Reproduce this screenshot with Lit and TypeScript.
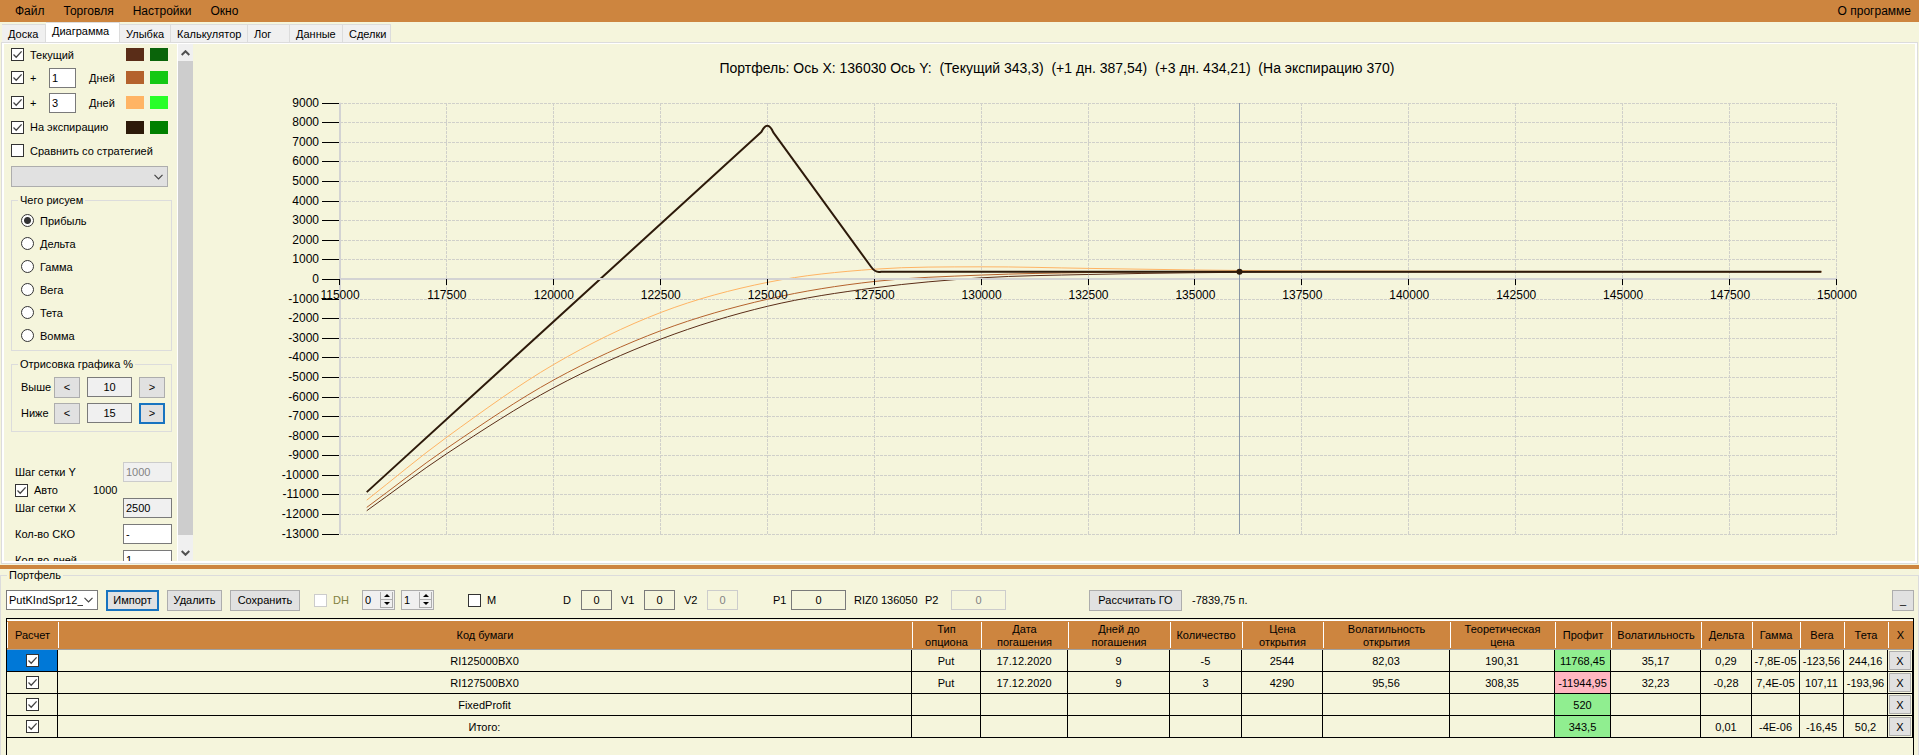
import { LitElement, html, svg, css } from "lit";
import { customElement } from "lit/decorators.js";
import { classMap } from "lit/directives/class-map.js";

const base = css`
  * {
    box-sizing: border-box;
  }
  button,
  input,
  select {
    font: inherit;
    color: inherit;
    margin: 0;
    border-radius: 0;
  }
  button {
    padding: 0;
    height: 21px;
    background: #e1e1e1;
    border: 1px solid #adadad;
  }
  button.focus {
    border: 2px solid #1874c0;
  }
  input[type="text"] {
    height: 20px;
    padding: 0 2px;
    background: #fff;
    border: 1px solid #7a7a7a;
  }
  input[type="checkbox"],
  input[type="radio"] {
    appearance: none;
    flex: none;
    width: 13px;
    height: 13px;
    background: #fff center / 11px 11px no-repeat;
    border: 1px solid #333;
  }
  input[type="checkbox"]:checked {
    background-image: url("data:image/svg+xml,%3Csvg xmlns='http://www.w3.org/2000/svg' viewBox='0 0 11 11'%3E%3Cpath d='M1.5 5.5 4.2 8.2 9.6 2.4' fill='none' stroke='%23444' stroke-width='1.3'/%3E%3C/svg%3E");
  }
  input[type="checkbox"]:disabled {
    border-color: #ccc;
  }
  input[type="radio"] {
    border-radius: 50%;
  }
  input[type="radio"]:checked {
    background-image: radial-gradient(circle, #333 3px, transparent 4px);
  }
  select {
    appearance: none;
    padding: 0 14px 0 2px;
    border: 1px solid #7a7a7a;
    background: #fff right 4px center / 9px 6px no-repeat
      url("data:image/svg+xml,%3Csvg xmlns='http://www.w3.org/2000/svg' viewBox='0 0 9 6'%3E%3Cpath d='M.5 .8 4.5 4.8 8.5 .8' fill='none' stroke='%23444' stroke-width='1.2'/%3E%3C/svg%3E");
  }
  label {
    white-space: nowrap;
  }
`;

const LEFT = 145;
const RIGHT = 1642;
const TOP = 58;
const BOTTOM = 489;
const px = (price: number) => LEFT + ((price - 115000) / 35000) * (RIGHT - LEFT);
const py = (value: number) => TOP + ((9000 - value) / 22000) * (BOTTOM - TOP);

const PRICES = [115625, 117500, 120000, 122500, 125000, 127500, 130000, 132500, 135000, 137500, 149633];
const CURVES = [
  { color: "#5a2d18", values: [-11830, -8910, -5550, -3070, -1390, -450, 60, 230, 320, 355, 370] },
  { color: "#b4622d", values: [-11660, -8640, -5150, -2640, -1030, -125, 200, 330, 375, 385, 370] },
  { color: "#ffb464", values: [-11290, -8070, -4360, -1710, -170, 500, 620, 540, 460, 410, 370] },
];

function smooth(values: number[]): string {
  const pts = values.map((v, i) => [px(PRICES[i]), py(v)]);
  const slope = pts.map((_, i) => {
    const a = pts[Math.max(0, i - 1)];
    const b = pts[Math.min(pts.length - 1, i + 1)];
    return (b[1] - a[1]) / (b[0] - a[0]);
  });
  let d = `M${pts[0][0]} ${pts[0][1]}`;
  for (let i = 1; i < pts.length; i++) {
    const [x0, y0] = pts[i - 1];
    const [x1, y1] = pts[i];
    const h = (x1 - x0) / 3;
    d += `C${x0 + h} ${y0 + h * slope[i - 1]} ${x1 - h} ${y1 - h * slope[i]} ${x1} ${y1}`;
  }
  return d;
}

@customElement("profit-chart")
class ProfitChart extends LitElement {
  static styles = css`
    :host {
      display: block;
      min-width: 0;
    }
    svg {
      display: block;
      width: 100%;
      height: 100%;
      font: 12px "Liberation Sans", Arial, sans-serif;
    }
    .title {
      font-size: 14px;
      white-space: pre;
      text-anchor: middle;
    }
    .grid {
      stroke: #d0d0ca;
      stroke-dasharray: 3 1;
      shape-rendering: crispEdges;
    }
    .axis {
      stroke: #d3d3d3;
      stroke-width: 2;
    }
    .tick {
      stroke: #000;
      shape-rendering: crispEdges;
    }
    .cursor {
      stroke: #8c9aaa;
      shape-rendering: crispEdges;
    }
    .ylabel {
      text-anchor: end;
    }
    .xlabel {
      text-anchor: middle;
    }
    .curve {
      fill: none;
    }
    .expiry {
      fill: none;
      stroke: #2d1a0a;
      stroke-width: 2;
      stroke-linejoin: round;
    }
  `;

  render() {
    const xs = Array.from({ length: 15 }, (_, i) => 115000 + i * 2500);
    const ys = Array.from({ length: 23 }, (_, i) => 9000 - i * 1000);
    const zero = py(0);
    const flat = py(370);
    return html`<svg viewBox="0 0 1720 516" role="img" aria-label="Портфель">
      <text class="title" x="862" y="28">Портфель: Ось X: 136030 Ось Y:  (Текущий 343,3)  (+1 дн. 387,54)  (+3 дн. 434,21)  (На экспирацию 370)</text>
      ${ys.map((v) => svg`<line class="grid" x1=${LEFT} x2=${RIGHT} y1=${py(v) + 0.5} y2=${py(v) + 0.5}></line>`)}
      ${xs.map((p) => svg`<line class="grid" x1=${px(p) - 0.5} x2=${px(p) - 0.5} y1=${TOP} y2=${BOTTOM}></line>`)}
      ${CURVES.map((c) => svg`<path class="curve" stroke=${c.color} d=${smooth(c.values)}></path>`)}
      <path
        class="expiry"
        d="M${px(115625)} ${py(-10880)}L${px(124850)} ${py(7500)}Q${px(125000)} ${py(8150)} ${px(125130)} ${py(7480)}L${px(127420)} ${py(610)}Q${px(127520)} ${py(300)} ${px(127650)} ${flat}H${px(149633)}"
      ></path>
      <line class="axis" x1=${LEFT} x2=${LEFT} y1=${TOP} y2=${BOTTOM}></line>
      <line class="axis" x1=${LEFT} x2=${RIGHT} y1=${zero} y2=${zero}></line>
      ${ys.map(
        (v) => svg`<line class="tick" x1="127" x2="144" y1=${py(v) + 0.5} y2=${py(v) + 0.5}></line>
          <text class="ylabel" x="124" y=${py(v) + 4}>${v}</text>`
      )}
      ${xs.map(
        (p) => svg`<line class="tick" x1=${px(p) - 0.5} x2=${px(p) - 0.5} y1=${zero} y2=${zero + 6}></line>
          <text class="xlabel" x=${px(p)} y=${zero + 20}>${p}</text>`
      )}
      <line class="cursor" x1=${px(136030)} x2=${px(136030)} y1=${TOP} y2=${BOTTOM}></line>
      <circle cx=${px(136030)} cy=${flat} r="3" fill="#2d1a0a"></circle>
    </svg>`;
  }
}

@customElement("side-panel")
class SidePanel extends LitElement {
  static styles = [
    base,
    css`
      :host {
        display: grid;
        grid-template-columns: 173px 15px;
        gap: 1px;
        background: #fff;
        margin-right: 2px;
        overflow: hidden;
        min-height: 0;
      }
      .body {
        background: #f5f5dc;
        padding: 0 5px 0 7px;
        overflow: hidden;
        min-height: 0;
      }
      .row {
        display: grid;
        grid-template-columns: 13px 13px 27px 1fr 18px 18px;
        column-gap: 6px;
        align-items: center;
        height: 24px;
        padding-right: 4px;
      }
      .row.top {
        height: 21px;
      }
      .row.tall {
        height: 25px;
      }
      .wide {
        grid-column: 2 / 5;
      }
      .days {
        width: 27px;
      }
      .unit {
        padding-left: 7px;
      }
      .swatch {
        height: 13px;
      }
      .check {
        display: flex;
        align-items: center;
        gap: 6px;
        height: 23px;
      }
      .compare {
        display: block;
        width: 157px;
        height: 21px;
        margin-top: 4px;
        background-color: #e1e1e1;
        border-color: #adadad;
      }
      fieldset {
        margin: 7px 0;
        padding: 2px 6px 3px 9px;
        border: 1px solid #dcdcdc;
      }
      legend {
        margin-left: -3px;
        padding: 0 2px;
        height: 13px;
        line-height: 13px;
      }
      .radios label {
        display: flex;
        align-items: center;
        gap: 6px;
        height: 23px;
      }
      .range {
        display: grid;
        grid-template-columns: 26px 26px 45px 26px;
        column-gap: 7px;
        align-items: center;
        height: 26px;
      }
      .range input {
        width: 45px;
        text-align: center;
        background: #f0f0f0;
      }
      .draw {
        padding-top: 3px;
        padding-bottom: 5px;
        margin-bottom: 0;
      }
      .range span {
        white-space: nowrap;
      }
      .steps {
        padding: 27px 0 0 4px;
      }
      .step {
        display: grid;
        grid-template-columns: 1fr 49px;
        align-items: center;
        height: 26px;
      }
      .step input {
        width: 49px;
      }
      .step .off {
        color: #838383;
        background: #f0f0f0;
        border-color: #ccc;
      }
      .step .grey {
        background: #f0f0f0;
      }
      .auto {
        display: flex;
        align-items: center;
        gap: 6px;
        height: 10px;
      }
      .auto output {
        margin-left: 29px;
      }
      .scroll {
        display: grid;
        grid-template-rows: 17px 1fr 17px;
        background: #f0f0f0;
        min-height: 0;
      }
      .scroll button {
        border: 0;
        height: auto;
        background: #f0f0f0;
        display: grid;
        place-items: center;
      }
      .thumb {
        margin-bottom: 9px;
        background: #cdcdcd;
      }
      .chev {
        width: 9px;
        height: 6px;
        fill: none;
        stroke: #505050;
        stroke-width: 2;
      }
    `,
  ];

  private days(id: string, value: string, a: string, b: string) {
    return html`<div class="row tall">
      <input type="checkbox" id=${id} checked />
      <label for=${id}>+</label>
      <input class="days" type="text" .value=${value} aria-label="Дней" />
      <span class="unit">Дней</span>
      ${this.swatch(a)}${this.swatch(b)}
    </div>`;
  }

  private swatch(color: string) {
    return html`<span class="swatch" style="background:${color}"></span>`;
  }

  private range(name: string, value: string, focus: boolean) {
    return html`<div class="range">
      <span>${name}</span>
      <button type="button">&lt;</button>
      <input type="text" .value=${value} aria-label=${name} />
      <button type="button" class=${classMap({ focus })}>&gt;</button>
    </div>`;
  }

  render() {
    const modes = ["Прибыль", "Дельта", "Гамма", "Вега", "Тета", "Вомма"];
    return html`
      <div class="body">
        <div class="row top">
          <input type="checkbox" id="now" checked /><label class="wide" for="now">Текущий</label>
          ${this.swatch("#5a2d18")}${this.swatch("#0a640a")}
        </div>
        ${this.days("plus1", "1", "#b4622d", "#14c814")}
        ${this.days("plus3", "3", "#ffb464", "#28ff28")}
        <div class="row">
          <input type="checkbox" id="exp" checked /><label class="wide" for="exp">На экспирацию</label>
          ${this.swatch("#2d1a0a")}${this.swatch("#008000")}
        </div>
        <label class="check"><input type="checkbox" />Сравнить со стратегией</label>
        <select class="compare" aria-label="Стратегия"></select>
        <fieldset class="radios">
          <legend>Чего рисуем</legend>
          ${modes.map(
            (m, i) => html`<label><input type="radio" name="mode" ?checked=${i === 0} />${m}</label>`
          )}
        </fieldset>
        <fieldset class="draw">
          <legend>Отрисовка графика %</legend>
          ${this.range("Выше", "10", false)} ${this.range("Ниже", "15", true)}
        </fieldset>
        <div class="steps">
          <div class="step">
            <label for="sy">Шаг сетки Y</label><input class="off" id="sy" type="text" value="1000" disabled />
          </div>
          <div class="auto">
            <input type="checkbox" id="auto" checked /><label for="auto">Авто</label><output>1000</output>
          </div>
          <div class="step">
            <label for="sx">Шаг сетки X</label><input class="grey" id="sx" type="text" value="2500" />
          </div>
          <div class="step"><label for="sko">Кол-во СКО</label><input id="sko" type="text" value="-" /></div>
          <div class="step"><label for="dn">Кол-во дней</label><input id="dn" type="text" value="1" /></div>
        </div>
      </div>
      <div class="scroll">
        <button type="button" aria-label="Вверх">
          <svg class="chev" viewBox="0 0 9 6"><path d="M.7 5 4.5 1.2 8.3 5"></path></svg>
        </button>
        <div class="thumb"></div>
        <button type="button" aria-label="Вниз">
          <svg class="chev" viewBox="0 0 9 6"><path d="M.7 1 4.5 4.8 8.3 1"></path></svg>
        </button>
      </div>
    `;
  }
}

const COLUMNS: [string, number][] = [
  ["Расчет", 51],
  ["Код бумаги", 0],
  ["Тип опциона", 69],
  ["Дата погашения", 87],
  ["Дней до погашения", 102],
  ["Количество", 72],
  ["Цена открытия", 81],
  ["Волатильность открытия", 127],
  ["Теоретическая цена", 105],
  ["Профит", 56],
  ["Волатильность", 90],
  ["Дельта", 51],
  ["Гамма", 48],
  ["Вега", 44],
  ["Тета", 44],
  ["X", 25],
];
const ROWS = [
  ["RI125000BX0", "Put", "17.12.2020", "9", "-5", "2544", "82,03", "190,31", "11768,45", "35,17", "0,29", "-7,8E-05", "-123,56", "244,16"],
  ["RI127500BX0", "Put", "17.12.2020", "9", "3", "4290", "95,56", "308,35", "-11944,95", "32,23", "-0,28", "7,4E-05", "107,11", "-193,96"],
  ["FixedProfit", "", "", "", "", "", "", "", "520", "", "", "", "", ""],
  ["Итого:", "", "", "", "", "", "", "", "343,5", "", "0,01", "-4E-06", "-16,45", "50,2"],
];
const PROFIT = 8;

@customElement("portfolio-panel")
class PortfolioPanel extends LitElement {
  static styles = [
    base,
    css`
      :host {
        display: flex;
        min-height: 0;
        overflow: hidden;
      }
      .box {
        flex: 1;
        min-width: 0;
        margin: 0;
        padding: 0 4px 0 5px;
        border: 1px solid #dcdcdc;
        border-bottom: 0;
        display: flex;
        flex-direction: column;
      }
      legend {
        margin-left: 1px;
        padding: 0 2px;
        line-height: 13px;
      }
      .bar {
        display: flex;
        align-items: center;
        height: 24px;
        margin: 6px 0;
      }
      .group {
        display: flex;
        align-items: center;
        gap: 8px;
      }
      .file {
        width: 92px;
        height: 20px;
      }
      .w53 {
        width: 53px;
      }
      .w55 {
        width: 55px;
      }
      .w70 {
        width: 70px;
      }
      .w93 {
        width: 93px;
      }
      .hedge {
        margin-left: 14px;
        width: 48px;
        gap: 6px;
        color: #80803c;
      }
      .spins {
        gap: 6px;
      }
      .mode {
        margin-left: 34px;
        width: 95px;
        gap: 6px;
      }
      .fields {
        gap: 9px;
      }
      .prices {
        margin-left: 35px;
      }
      .field {
        display: flex;
        align-items: center;
      }
      .field input {
        width: 31px;
        text-align: center;
        background: transparent;
      }
      .field input:disabled {
        color: #838383;
        border-color: #ccc;
      }
      .field.long input {
        width: 55px;
      }
      .l18 {
        width: 18px;
      }
      .l23 {
        width: 23px;
      }
      .l26 {
        width: 26px;
      }
      .code {
        width: 63px;
        white-space: nowrap;
      }
      .calc {
        margin-left: 83px;
        gap: 10px;
      }
      .min {
        margin-left: auto;
        width: 22px;
      }
      .spin {
        display: grid;
        grid-template-columns: 1fr 13px;
        width: 33px;
        height: 20px;
        padding: 1px;
        border: 1px solid #adadad;
        background: #f0f0f0;
      }
      .spin input {
        width: 100%;
        height: 16px;
        padding: 0 1px;
        border: 0;
        background: none;
      }
      .arrows {
        display: grid;
        grid-template-rows: 8px 8px;
      }
      .arrows button {
        height: 8px;
        display: grid;
        place-items: center;
        background: #f0f0f0;
        border-width: 0 1px 1px;
      }
      .arrows svg {
        width: 6px;
        height: 3px;
      }
      .wrap {
        flex: 1;
        min-height: 0;
        border: 1px solid #000;
        border-bottom: 0;
        padding-top: 1px;
      }
      table {
        width: 100%;
        table-layout: fixed;
        border-collapse: separate;
        border-spacing: 0;
      }
      th {
        height: 30px;
        padding: 1px 4px 0;
        line-height: 13px;
        font-weight: normal;
        background: linear-gradient(#fff, #fff) left center / 1px 26px no-repeat, #cd853f;
        border-top: 1px solid #fff;
        border-bottom: 1px solid #a0a0a0;
      }
      td {
        height: 22px;
        padding: 0;
        text-align: center;
        white-space: nowrap;
        border-right: 1px solid #000;
        border-bottom: 1px solid #000;
      }
      td input[type="checkbox"] {
        display: block;
        margin: 0 auto;
      }
      td.on {
        background: #0078d7;
      }
      td.gain {
        background: #90ee90;
      }
      td.loss {
        background: #ffb6c1;
      }
      td button {
        display: block;
        width: 22px;
        height: 19px;
        margin: 0 auto;
      }
    `,
  ];

  private field(id: string, name: string, width: string, disabled = false, long = false) {
    return html`<div class=${classMap({ field: true, long })}>
      <label class=${width} for=${id}>${name}</label>
      <input type="text" id=${id} value="0" ?disabled=${disabled} />
    </div>`;
  }

  private spin(value: string) {
    return html`<div class="spin">
      <input type="text" .value=${value} aria-label="DH" />
      <div class="arrows">
        <button type="button" aria-label="+"><svg viewBox="0 0 6 3"><path d="M0 3 3 0 6 3z"></path></svg></button>
        <button type="button" aria-label="-"><svg viewBox="0 0 6 3"><path d="M0 0 3 3 6 0z"></path></svg></button>
      </div>
    </div>`;
  }

  render() {
    return html`<fieldset class="box">
      <legend>Портфель</legend>
      <div class="bar">
        <div class="group">
          <select class="file" aria-label="Портфель"><option>PutKIndSpr12_</option></select>
          <button type="button" class="w53 focus">Импорт</button>
          <button type="button" class="w55">Удалить</button>
          <button type="button" class="w70">Сохранить</button>
        </div>
        <label class="group hedge"><input type="checkbox" disabled />DH</label>
        <div class="group spins">${this.spin("0")}${this.spin("1")}</div>
        <label class="group mode"><input type="checkbox" />M</label>
        <div class="group fields">
          ${this.field("d", "D", "l18")} ${this.field("v1", "V1", "l23")} ${this.field("v2", "V2", "l23", true)}
        </div>
        <div class="group prices">
          ${this.field("p1", "P1", "l18", false, true)}
          <span class="code">RIZ0 136050</span>
          ${this.field("p2", "P2", "l26", true, true)}
        </div>
        <div class="group calc">
          <button type="button" class="w93">Рассчитать ГО</button>
          <span>-7839,75 п.</span>
        </div>
        <button type="button" class="min">_</button>
      </div>
      <div class="wrap">
        <table>
          <colgroup>
            ${COLUMNS.map(([, w]) => html`<col style=${w ? `width:${w}px` : ""} />`)}
          </colgroup>
          <thead>
            <tr>
              ${COLUMNS.map(([name]) => html`<th scope="col">${name}</th>`)}
            </tr>
          </thead>
          <tbody>
            ${ROWS.map(
              (row, r) => html`<tr>
                <td class=${classMap({ on: r === 0 })}>
                  <input type="checkbox" checked aria-label=${row[0]} />
                </td>
                ${row.map(
                  (cell, c) => html`<td
                    class=${classMap({
                      gain: c === PROFIT && !cell.startsWith("-"),
                      loss: c === PROFIT && cell.startsWith("-"),
                    })}
                  >${cell}</td>`
                )}
                <td><button type="button">X</button></td>
              </tr>`
            )}
          </tbody>
        </table>
      </div>
    </fieldset>`;
  }
}

@customElement("app-root")
class AppRoot extends LitElement {
  static styles = [
    base,
    css`
      :host {
        display: flex;
        flex-direction: column;
        height: 100vh;
        overflow: hidden;
        background: #f5f5dc;
        color: #000;
        font: 11px "Liberation Sans", Arial, sans-serif;
      }
      .menu {
        display: flex;
        gap: 19px;
        height: 22px;
        padding: 0 8px 0 15px;
        align-items: center;
        background: #cd853f;
      }
      .menu button {
        border: 0;
        background: none;
        font-size: 12px;
      }
      .menu .about {
        margin-left: auto;
      }
      .tabs {
        display: flex;
        align-items: flex-end;
        height: 20px;
        padding-left: 2px;
      }
      .tabs button {
        height: 18px;
        padding-left: 6px;
        text-align: left;
        background: #f0f0f0;
        border: 1px solid #dcdcdc;
        border-width: 1px 1px 0 0;
      }
      .tabs .active {
        height: 20px;
        background: #fff;
        padding-bottom: 3px;
      }
      .page {
        flex: 521 1 0;
        min-height: 0;
        display: grid;
        grid-template-columns: auto 1fr;
        grid-template-rows: minmax(0, 1fr);
        margin: 0 1px;
        padding: 1px 2px 2px;
        border: 1px solid #dcdcdc;
        background: linear-gradient(#f5f5dc, #f5f5dc) content-box, #fff;
      }
      .splitter {
        height: 4px;
        margin-top: 1px;
        background: #cd853f;
      }
      portfolio-panel {
        flex: 187 1 0;
      }
    `,
  ];

  render() {
    const tabs: [string, number][] = [
      ["Доска", 44],
      ["Диаграмма", 74],
      ["Улыбка", 51],
      ["Калькулятор", 77],
      ["Лог", 42],
      ["Данные", 53],
      ["Сделки", 48],
    ];
    return html`
      <nav class="menu">
        <button type="button">Файл</button>
        <button type="button">Торговля</button>
        <button type="button">Настройки</button>
        <button type="button">Окно</button>
        <button type="button" class="about">О программе</button>
      </nav>
      <div class="tabs" role="tablist">
        ${tabs.map(
          ([name, w], i) => html`<button
            type="button"
            role="tab"
            class=${classMap({ active: i === 1 })}
            style="width:${w}px"
          >${name}</button>`
        )}
      </div>
      <main class="page">
        <side-panel></side-panel>
        <profit-chart></profit-chart>
      </main>
      <div class="splitter"></div>
      <portfolio-panel></portfolio-panel>
    `;
  }
}
